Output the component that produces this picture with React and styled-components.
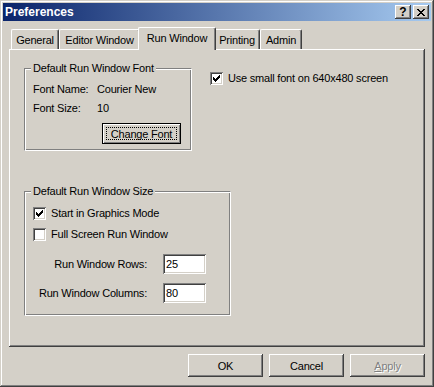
import React from 'react';
import styled, { createGlobalStyle } from 'styled-components';

const Global = createGlobalStyle`
  html, body { margin: 0; padding: 0; background: #d4d0c8; }
  body {
    font-family: "Liberation Sans", Arial, sans-serif;
    font-size: 11px;
    letter-spacing: -0.2px;
    color: #000;
  }
  * { box-sizing: border-box; }
`;

const Window = styled.div`
  width: 434px;
  height: 387px;
  padding: 3px;
  background: #d4d0c8;
  display: flex;
  flex-direction: column;
  box-shadow: inset -1px -1px #404040, inset 1px 1px #d4d0c8,
    inset -2px -2px #808080, inset 2px 2px #fff;
`;

const TitleBar = styled.div`
  height: 18px;
  display: flex;
  align-items: center;
  padding: 0 2px;
  background: linear-gradient(to right, #0a246a, #a6caf0);
  color: #fff;
  font-weight: bold;
  font-size: 12px;
  letter-spacing: 0;
`;

const TitleText = styled.span`
  flex: 1;
`;

const TitleButtons = styled.div`
  display: flex;
  gap: 2px;
`;

const TitleButton = styled.div`
  width: 16px;
  height: 14px;
  background: #d4d0c8;
  color: #000;
  display: flex;
  align-items: center;
  justify-content: center;
  font-size: 12px;
  font-weight: bold;
  line-height: 14px;
  box-shadow: inset -1px -1px #404040, inset 1px 1px #fff,
    inset -2px -2px #808080, inset 2px 2px #d4d0c8;
`;

const Body = styled.div`
  display: flex;
  flex-direction: column;
  padding: 6px 6px 0 6px;
`;

const TabRow = styled.div`
  display: flex;
  align-items: flex-end;
  height: 22px;
  padding-left: 2px;
  position: relative;
  z-index: 1;
`;

const Tab = styled.div`
  width: ${(p) => p.$w}px;
  height: ${(p) => (p.$active ? 23 : 20)}px;
  margin: ${(p) => (p.$active ? '0 -2px -1px -2px' : '0')};
  padding-top: 4px;
  line-height: 13px;
  text-align: center;
  background: #d4d0c8;
  border-top: 1px solid #fff;
  border-left: 1px solid #fff;
  border-right: 1px solid #404040;
  border-top-left-radius: 2px;
  border-top-right-radius: 2px;
  box-shadow: inset -1px 0 #808080;
  position: relative;
  z-index: ${(p) => (p.$active ? 2 : 1)};
  white-space: nowrap;
`;

const Panel = styled.div`
  height: 298px;
  display: grid;
  grid-template-columns: 168px auto;
  grid-template-rows: auto auto;
  row-gap: 40px;
  align-content: start;
  justify-content: start;
  padding: 19px 0 0 15px;
  box-shadow: inset -1px -1px #404040, inset 1px 1px #fff,
    inset -2px -2px #808080;
`;

const Group = styled.div`
  position: relative;
  width: ${(p) => p.$w}px;
  padding: ${(p) => p.$pad};
  grid-column: ${(p) => (p.$span ? '1 / span 2' : 'auto')};
  justify-self: start;
  display: flex;
  flex-direction: column;
  border-top: 1px solid #808080;
  border-left: 1px solid #808080;
  border-right: 1px solid #fff;
  border-bottom: 1px solid #fff;
  box-shadow: inset 1px 1px #fff, inset -1px -1px #808080;
`;

const Legend = styled.div`
  position: absolute;
  top: -7px;
  left: 6px;
  padding: 0 2px;
  line-height: 13px;
  background: #d4d0c8;
  white-space: nowrap;
`;

const InfoList = styled.div`
  display: flex;
  flex-direction: column;
  gap: 6px;
`;

const InfoRow = styled.div`
  display: grid;
  grid-template-columns: 64px auto;
  line-height: 13px;
  white-space: nowrap;
`;

const DefaultButton = styled.div`
  position: relative;
  width: 79px;
  height: 21px;
  margin: 8px 0 0 69px;
  border: 1px solid #000;
  display: flex;
  align-items: center;
  justify-content: center;
  box-shadow: inset 1px 1px #fff, inset -1px -1px #808080;
  &::after {
    content: '';
    position: absolute;
    inset: 3px;
    border: 1px dotted #000;
  }
`;

const CheckList = styled.div`
  display: flex;
  flex-direction: column;
  gap: 8px;
`;

const CheckRow = styled.div`
  display: flex;
  align-items: center;
  align-self: start;
  gap: 5px;
  line-height: 13px;
  white-space: nowrap;
  margin: ${(p) => p.$m || '0'};
`;

const Box = styled.div`
  width: 13px;
  height: 13px;
  flex: none;
  background: #fff;
  display: flex;
  align-items: center;
  justify-content: center;
  box-shadow: inset 1px 1px #808080, inset -1px -1px #fff,
    inset 2px 2px #404040, inset -2px -2px #d4d0c8;
`;

const FieldList = styled.div`
  display: flex;
  flex-direction: column;
  gap: 9px;
  margin-top: 13px;
`;

const FieldRow = styled.div`
  display: grid;
  grid-template-columns: 114px 43px;
  column-gap: 16px;
  align-items: center;
`;

const FieldLabel = styled.span`
  text-align: right;
  white-space: nowrap;
  line-height: 13px;
`;

const Field = styled.input`
  width: 43px;
  height: 20px;
  border: none;
  outline: none;
  padding: 0 0 0 3px;
  margin: 0;
  background: #fff;
  font: inherit;
  letter-spacing: inherit;
  color: #000;
  box-shadow: inset 1px 1px #808080, inset -1px -1px #fff,
    inset 2px 2px #404040, inset -2px -2px #d4d0c8;
`;

const ButtonRow = styled.div`
  display: flex;
  justify-content: flex-end;
  gap: 6px;
  margin-top: 7px;
`;

const Button = styled.div`
  width: 75px;
  height: 23px;
  display: flex;
  align-items: center;
  justify-content: center;
  color: ${(p) => (p.$disabled ? '#808080' : '#000')};
  text-shadow: ${(p) => (p.$disabled ? '1px 1px #fff' : 'none')};
  box-shadow: inset -1px -1px #404040, inset 1px 1px #fff,
    inset -2px -2px #808080, inset 2px 2px #d4d0c8;
`;

const Pixels = ({ rows, color = '#000' }) => {
  const h = rows.length;
  const w = rows[0].length;
  const rects = [];
  rows.forEach((r, y) =>
    r.split('').forEach((c, x) => {
      if (c === '#') rects.push(<rect key={`${x}-${y}`} x={x} y={y} width="1" height="1" />);
    })
  );
  return (
    <svg width={w} height={h} viewBox={`0 0 ${w} ${h}`} fill={color} shapeRendering="crispEdges">
      {rects}
    </svg>
  );
};

const CHECK = ['......#', '.....##', '#...###', '##.###.', '#####..', '.###...', '..#....'];
const CLOSE = ['##....##', '.##..##.', '..####..', '...##...', '..####..', '.##..##.', '##....##'];

const Checkbox = ({ checked }) => <Box>{checked && <Pixels rows={CHECK} />}</Box>;

export default function App() {
  return (
    <>
      <Global />
      <Window>
        <TitleBar>
          <TitleText>Preferences</TitleText>
          <TitleButtons>
            <TitleButton>?</TitleButton>
            <TitleButton>
              <Pixels rows={CLOSE} />
            </TitleButton>
          </TitleButtons>
        </TitleBar>
        <Body>
          <TabRow>
            <Tab $w={48}>General</Tab>
            <Tab $w={81}>Editor Window</Tab>
            <Tab $w={78} $active>Run Window</Tab>
            <Tab $w={46}>Printing</Tab>
            <Tab $w={42}>Admin</Tab>
          </TabRow>
          <Panel>
            <Group $w={168} $pad="14px 10px 6px 8px">
              <Legend>Default Run Window Font</Legend>
              <InfoList>
                <InfoRow>
                  <span>Font Name:</span>
                  <span>Courier New</span>
                </InfoRow>
                <InfoRow>
                  <span>Font Size:</span>
                  <span>10</span>
                </InfoRow>
              </InfoList>
              <DefaultButton>Change Font</DefaultButton>
            </Group>
            <CheckRow $m="4px 0 0 18px">
              <Checkbox checked />
              <span>Use small font on 640x480 screen</span>
            </CheckRow>
            <Group $w={207} $span $pad="15px 8px 12px 8px">
              <Legend>Default Run Window Size</Legend>
              <CheckList>
                <CheckRow>
                  <Checkbox checked />
                  <span>Start in Graphics Mode</span>
                </CheckRow>
                <CheckRow>
                  <Checkbox />
                  <span>Full Screen Run Window</span>
                </CheckRow>
              </CheckList>
              <FieldList>
                <FieldRow>
                  <FieldLabel>Run Window Rows:</FieldLabel>
                  <Field readOnly value="25" />
                </FieldRow>
                <FieldRow>
                  <FieldLabel>Run Window Columns:</FieldLabel>
                  <Field readOnly value="80" />
                </FieldRow>
              </FieldList>
            </Group>
          </Panel>
          <ButtonRow>
            <Button>OK</Button>
            <Button>Cancel</Button>
            <Button $disabled>
              <span>
                <u>A</u>pply
              </span>
            </Button>
          </ButtonRow>
        </Body>
      </Window>
    </>
  );
}
